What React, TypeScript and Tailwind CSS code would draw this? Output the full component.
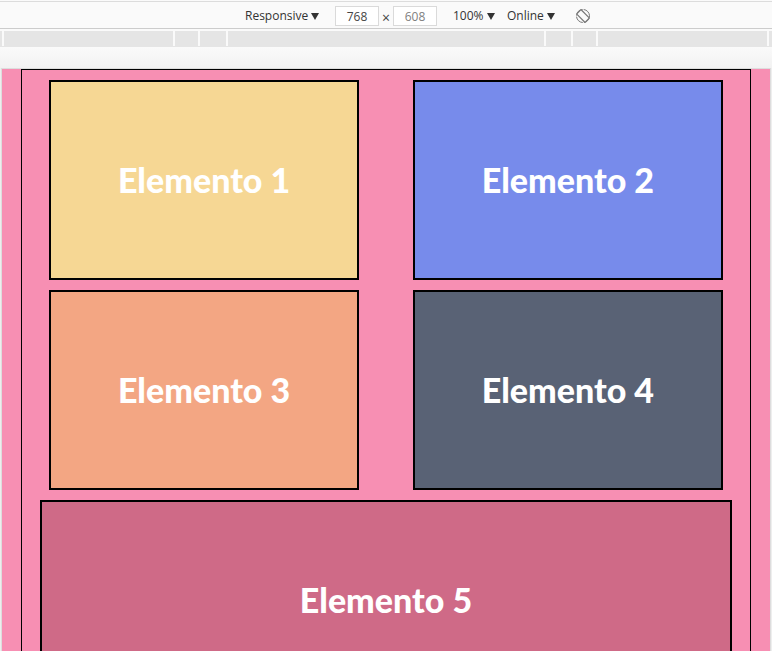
import React from "react";

type PickerProps = {
  label: string;
  options: string[];
  className: string;
};

function Picker({ label, options, className }: PickerProps) {
  return (
    <div className={`relative flex items-center ${className}`}>
      <select
        aria-label={label}
        className="h-5 w-full cursor-pointer appearance-none bg-transparent p-0 text-xs text-[#333333] outline-none"
      >
        {options.map((option) => (
          <option key={option}>{option}</option>
        ))}
      </select>
      <svg
        viewBox="0 0 8 7"
        className="pointer-events-none absolute right-0 h-[7px] w-2"
        fill="#333333"
        aria-hidden="true"
      >
        <path d="M0 0H8L4 7Z" />
      </svg>
    </div>
  );
}

function SizeInput({ label, value, color }: { label: string; value: string; color: string }) {
  return (
    <input
      type="text"
      aria-label={label}
      defaultValue={value}
      className={`h-5 w-11 border border-[#dadada] bg-white p-0 text-center text-xs outline-none ${color}`}
    />
  );
}

function RotateIcon() {
  return (
    <svg viewBox="0 0 16 16" className="size-4" fill="none" stroke="#777777" aria-hidden="true">
      <circle cx="8" cy="8" r="6.5" strokeWidth="1" strokeDasharray="9 1.2" />
      <rect x="4.9" y="2" width="6.2" height="12" rx="1" transform="rotate(-45 8 8)" fill="#fafafa" strokeWidth="1.2" />
    </svg>
  );
}

function Toolbar() {
  return (
    <header className="flex h-[27px] shrink-0 items-center justify-center border-b border-[#cccccc] bg-[#fafafa] pt-0.5 pl-16">
      <Picker label="Device" options={["Responsive"]} className="w-[74px]" />
      <div className="ml-4 flex items-center">
        <SizeInput label="Width" value="768" color="text-[#444444]" />
        <span className="w-[14px] pt-1 text-center text-sm leading-4 text-[#444444]">×</span>
        <SizeInput label="Height" value="608" color="text-[#808080]" />
      </div>
      <Picker label="Zoom" options={["100%"]} className="ml-4 w-[42px]" />
      <Picker label="Throttling" options={["Online"]} className="ml-3 w-12" />
      <button type="button" aria-label="Rotate" className="ml-5 cursor-pointer">
        <RotateIcon />
      </button>
    </header>
  );
}

function BreakpointBar() {
  return (
    <div className="mt-0.5 flex h-4 shrink-0 bg-[#e5e5e5]">
      <div className="h-[15px] w-1 border-r-2 border-[#fafafa]" />
      <div className="h-[15px] flex-1 border-r-2 border-[#fafafa]" />
      <div className="h-[15px] w-[25px] border-r-2 border-[#fafafa]" />
      <div className="h-[15px] w-7 border-r-2 border-[#fafafa]" />
      <div className="h-[15px] w-[318px] border-r-2 border-[#fafafa]" />
      <div className="h-[15px] w-[27px] border-r-2 border-[#fafafa]" />
      <div className="h-[15px] w-[25px] border-r-2 border-[#fafafa]" />
      <div className="h-[15px] flex-1 border-r-2 border-[#fafafa]" />
      <div className="h-[15px] w-[3px]" />
    </div>
  );
}

const boxes = [
  { title: "Elemento 1", style: "w-[85%] bg-[#f6d794]" },
  { title: "Elemento 2", style: "w-[85%] bg-[#778beb]" },
  { title: "Elemento 3", style: "w-[85%] bg-[#f3a683]" },
  { title: "Elemento 4", style: "w-[85%] bg-[#596275]" },
  { title: "Elemento 5", style: "col-span-2 w-[95%] bg-[#cf6a87]" },
];

export default function App() {
  return (
    <div className="flex h-screen flex-col overflow-hidden bg-[#fafafa] pt-px font-['Open_Sans','Noto_Sans',sans-serif]">
      <div className="h-px shrink-0 bg-[#dcdcdc]" />
      <Toolbar />
      <BreakpointBar />
      <div className="flex min-h-0 flex-1 flex-col bg-[#eeeeee]">
        <div className="h-[21px] shrink-0 bg-linear-to-b from-[#fafafa] to-[#f2f2f2]" />
        <main className="mx-px min-h-0 flex-1 overflow-hidden border-x border-t border-[#dddddd] bg-[#f78fb3]">
          <section className="mx-auto grid w-[95%] grid-cols-2 justify-items-center gap-y-2.5 border border-black py-2.5">
            {boxes.map((box) => (
              <article
                key={box.title}
                className={`flex h-[200px] items-center justify-center border-2 border-black ${box.style}`}
              >
                <h2 className="font-['Comic_Sans_MS','Lato',sans-serif] text-[34px] leading-[48px] font-black text-white">
                  {box.title}
                </h2>
              </article>
            ))}
          </section>
        </main>
      </div>
    </div>
  );
}
